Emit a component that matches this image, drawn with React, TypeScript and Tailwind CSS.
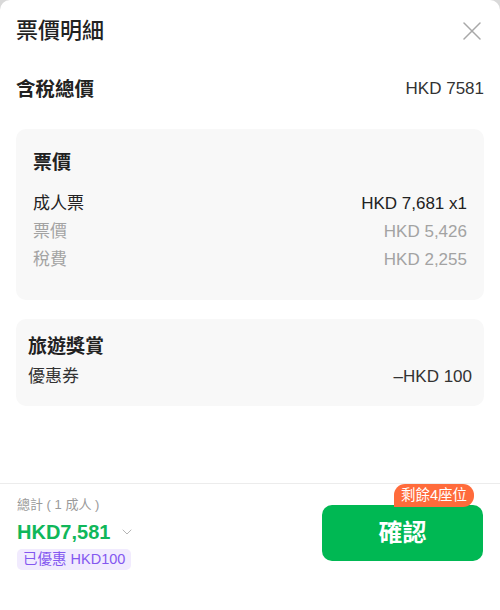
import { ChevronDown } from "lucide-react";

const font = { fontFamily: '"Liberation Sans", "Noto Sans CJK TC", sans-serif' };

function Row({ label, value, muted }: { label: string; value: string; muted?: boolean }) {
  return (
    <div
      className={
        "flex items-center justify-between text-[17px] leading-[28px] " +
        (muted ? "text-[#a3a3a3]" : "text-[#222]")
      }
    >
      <span>{label}</span>
      <span>{value}</span>
    </div>
  );
}

export default function App() {
  return (
    <div className="h-[610px] w-[500px] bg-[#d9d9d9]" style={font}>
      <div className="flex h-full flex-col overflow-hidden rounded-t-[10px] bg-white">
        <div className="flex items-center justify-between pl-4 pr-[19px] pt-[17px]">
          <h1 className="text-[22px] font-medium leading-[28px] text-[#222]">票價明細</h1>
          <svg width="18" height="18" viewBox="0 0 18 18" className="text-[#a8a8a8]">
            <path d="M1 1L17 17M17 1L1 17" stroke="currentColor" strokeWidth="1.5" strokeLinecap="round" />
          </svg>
        </div>

        <div className="mt-[30px] flex items-center justify-between px-4">
          <span className="text-[19.5px] font-bold leading-[28px] text-[#222]">含稅總價</span>
          <span className="text-[17px] text-[#333]">HKD 7581</span>
        </div>

        <div className="mx-4 mt-[26px] rounded-[10px] bg-[#f8f8f8] px-[17px] pb-[26px] pt-[20px]">
          <div className="text-[19px] font-bold leading-[28px] text-[#222]">票價</div>
          <div className="mt-[13px]">
            <Row label="成人票" value="HKD 7,681 x1" />
            <Row label="票價" value="HKD 5,426" muted />
            <Row label="稅費" value="HKD 2,255" muted />
          </div>
        </div>

        <div className="mx-4 mt-[19px] rounded-[10px] bg-[#f8f8f8] px-3 pb-[15px] pt-[14px]">
          <div className="text-[19px] font-bold leading-[28px] text-[#222]">旅遊獎賞</div>
          <div className="mt-[2px] flex items-center justify-between text-[17px] leading-[28px] text-[#333]">
            <span>優惠券</span>
            <span>–HKD 100</span>
          </div>
        </div>

        <div className="flex-1" />

        <div className="h-[127px] border-t border-[#ececec] px-[17px] pt-[12px]">
          <div className="flex items-start justify-between">
            <div>
              <div className="text-[13px] leading-[18px] text-[#9a9a9a]">總計 ( 1 成人 )</div>
              <div className="mt-[5px] flex items-center">
                <span className="text-[20px] font-bold leading-[26px] text-[#10b75a]">HKD7,581</span>
                <ChevronDown className="ml-[9px] h-[16px] w-[16px] text-[#b5b5b5]" strokeWidth={1.5} />
              </div>
              <div className="mt-[4px] inline-block rounded-[5px] bg-[#f1ebfe] px-[6px] text-[14.5px] leading-[21px] text-[#8458f0]">
                已優惠 HKD100
              </div>
            </div>
            <div className="relative mt-[9px]">
              <button className="h-[56px] w-[161px] rounded-[10px] bg-[#00b853] text-[24px] font-bold text-white">
                確認
              </button>
              <span className="absolute -top-[21px] right-[9px] rounded-t-[11px] rounded-br-[11px] bg-[#ff6b3b] px-[7px] text-[14.5px] leading-[23px] text-white">
                剩餘4座位
              </span>
            </div>
          </div>
        </div>
      </div>
    </div>
  );
}
